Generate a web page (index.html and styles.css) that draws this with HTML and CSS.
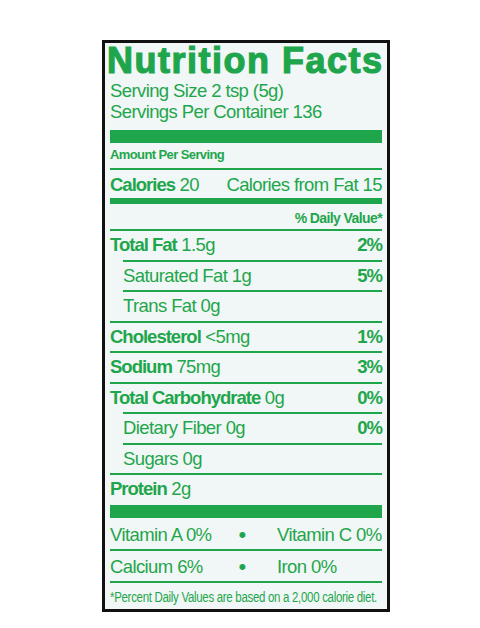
FILE: index.html
```html
<!DOCTYPE html>
<html lang="en">
<head>
    <meta charset="UTF-8">
    <meta name="viewport" content="width=device-width, initial-scale=1.0">
    <title>Nutrition Facts</title>
    <link rel="stylesheet" href="styles.css">
</head>
<body>
    <div class="label">
        <div class="title">Nutrition Facts</div>
        <div class="serving first">Serving Size 2 tsp (5g)</div>
        <div class="serving">Servings Per Container 136</div>

        <div class="bar-thick"></div>
        <div class="amount">Amount Per Serving</div>

        <div class="calories">
            <span><b>Calories</b> 20</span>
            <span>Calories from Fat 15</span>
        </div>
        <div class="bar-medium"></div>
        <div class="dv">% Daily Value*</div>

        <div class="row"><span><b>Total Fat</b> 1.5g</span><b>2%</b></div>
        <div class="row sub"><span>Saturated Fat 1g</span><b>5%</b></div>
        <div class="row sub"><span>Trans Fat 0g</span></div>
        <div class="row"><span><b>Cholesterol</b> &lt;5mg</span><b>1%</b></div>
        <div class="row"><span><b>Sodium</b> 75mg</span><b>3%</b></div>
        <div class="row"><span><b>Total Carbohydrate</b> 0g</span><b>0%</b></div>
        <div class="row sub"><span>Dietary Fiber 0g</span><b>0%</b></div>
        <div class="row sub"><span>Sugars 0g</span></div>
        <div class="row last"><span><b>Protein</b> 2g</span></div>

        <div class="bar-thick bar-flush"></div>

        <div class="vit">
            <span>Vitamin A 0%</span>
            <span class="dot">&bull;</span>
            <span class="vit-right">Vitamin C 0%</span>
        </div>
        <div class="vit">
            <span>Calcium 6%</span>
            <span class="dot">&bull;</span>
            <span class="vit-right">Iron 0%</span>
        </div>

        <div class="footnote"><span class="footnote-text">*Percent Daily Values are based on a 2,000 calorie diet.</span></div>
    </div>
</body>
</html>
```

FILE: styles.css
```css
body {
    margin: 0;
    background: #fff;
    color: #1fa64c;
    font-family: "Liberation Sans", Arial, sans-serif;
}
.label {
    width: 288px;
    box-sizing: border-box;
    margin: 40px 0 0 102px;
    padding: 0 5px;
    border: 3px solid #111;
    background: #f1f6f6;
}
.title {
    font-weight: bold;
    font-size: 36px;
    line-height: 36px;
    letter-spacing: 1.5px;
    margin-left: -3px;
    white-space: nowrap;
    -webkit-text-stroke: 1.2px #1fa64c;
}
.serving {
    font-size: 18.5px;
    line-height: 21px;
    letter-spacing: -0.6px;
    white-space: nowrap;
}
.serving.first {
    margin-top: 1px;
}
b {
    letter-spacing: -1px;
}
.bar-thick {
    height: 13px;
    margin-top: 7.5px;
    background: #1fa64c;
}
.bar-thick.bar-flush {
    margin-top: 0;
}
.amount {
    font-weight: bold;
    font-size: 13px;
    line-height: 16px;
    margin-top: 4px;
    padding-bottom: 5px;
}
.amount,
.dv {
    white-space: nowrap;
    letter-spacing: -0.6px;
}
.calories {
    display: flex;
    justify-content: space-between;
    border-top: 2px solid #1fa64c;
    padding-top: 2.5px;
    font-size: 18.5px;
    line-height: 26px;
    letter-spacing: -0.6px;
    white-space: nowrap;
}
.bar-medium {
    height: 6px;
    background: #1fa64c;
}
.dv {
    text-align: right;
    font-weight: bold;
    font-size: 14px;
    line-height: 18px;
    padding: 4.5px 0 2.5px;
}
.row {
    display: flex;
    justify-content: space-between;
    border-top: 2px solid #1fa64c;
    font-size: 18.5px;
    line-height: 26px;
    letter-spacing: -0.6px;
    padding-top: 1px;
    padding-bottom: 1.5px;
    white-space: nowrap;
}
.row.sub {
    margin-left: 13px;
}
.row.last {
    padding-bottom: 3px;
}
.vit {
    display: grid;
    grid-template-columns: 117px 30px 1fr;
    font-size: 18.5px;
    line-height: 26px;
    letter-spacing: -0.6px;
    padding: 4px 0 1px;
    white-space: nowrap;
}
.vit + .vit {
    border-top: 2px solid #1fa64c;
    padding-top: 3px;
}
.dot {
    text-align: center;
    font-size: 22px;
}
.vit-right {
    padding-left: 20px;
}
.footnote {
    border-top: 2px solid #1fa64c;
    line-height: 18px;
    padding: 5px 0 3px;
    white-space: nowrap;
}
.footnote-text {
    display: inline-block;
    font-size: 15.5px;
    letter-spacing: -0.4px;
    transform: scaleX(0.74);
    transform-origin: left center;
}
```
